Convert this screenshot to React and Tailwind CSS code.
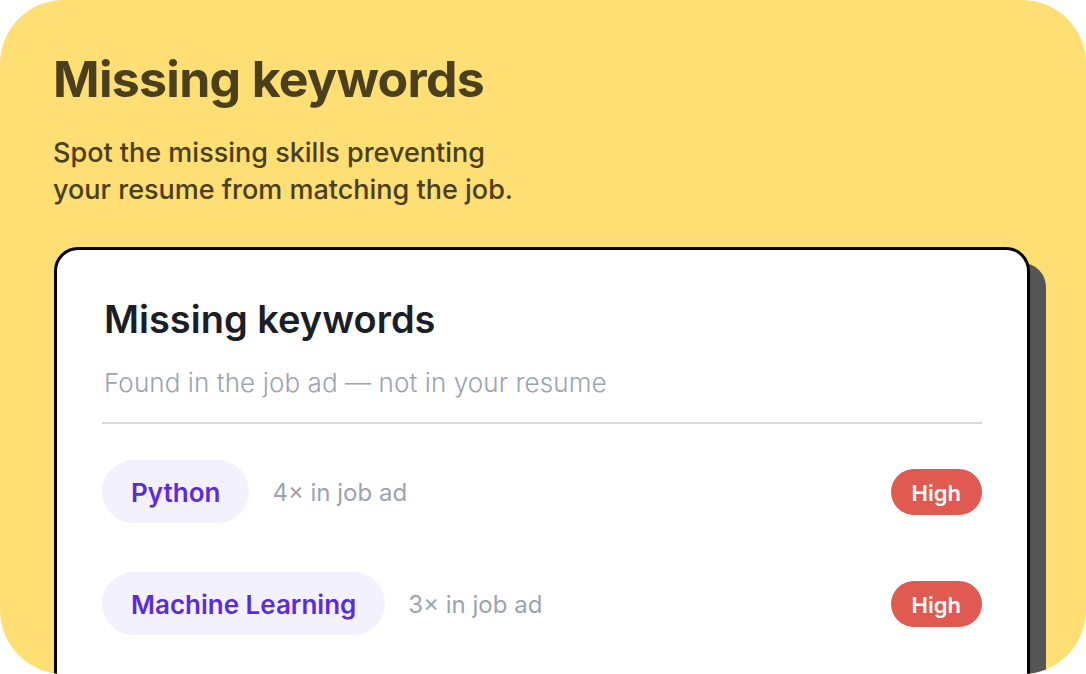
const rows = [
  { name: 'Python', count: '4× in job ad', level: 'High' },
  { name: 'Machine Learning', count: '3× in job ad', level: 'High' },
];

export default function App() {
  return (
    <div className="w-[1086px] h-[674px] bg-white font-['Inter','Liberation_Sans',sans-serif]">
      <div className="h-full rounded-[64px] bg-[#FFDE73] overflow-hidden pl-[53px] pt-[54px]">
        <h1 className="text-[50px] leading-none font-bold text-[#4A401E] tracking-[-0.7px]">Missing keywords</h1>
        <p className="mt-[30px] text-[27px] leading-[37px] font-medium text-[#4A401E]">
          Spot the missing skills preventing
          <br />
          your resume from matching the job.
        </p>

        <div className="mt-[39px] ml-px w-[976px] h-[520px] rounded-[24px] border-[3px] border-black bg-white shadow-[16px_16px_0_#555555] px-[45px] pt-[50px]">
          <h2 className="text-[38px] leading-none font-semibold text-[#1B1E27] pl-[2px]">Missing keywords</h2>
          <p className="mt-[32px] text-[26px] leading-none font-light tracking-[0.1px] text-[#9CA3AF] pl-[2px]">
            Found in the job ad — not in your resume
          </p>
          <div className="mt-[26px] h-[2px] bg-[#D8D8DD]" />

          <div className="mt-[36px] flex flex-col gap-[49px]">
            {rows.map((r) => (
              <div key={r.name} className="flex items-center justify-between">
                <div className="flex items-center gap-[23px]">
                  <span className="h-[63px] px-[29px] pt-[2px] rounded-full bg-[#F3F1FE] text-[#5B2BDD] text-[26px] font-semibold flex items-center">
                    {r.name}
                  </span>
                  <span className="pt-[2px] text-[24px] text-[#9CA3AF]">{r.count}</span>
                </div>
                <span className="h-[46px] px-[21px] pt-[3px] rounded-full bg-[#E05A52] text-white text-[22px] font-semibold flex items-center">
                  {r.level}
                </span>
              </div>
            ))}
          </div>
        </div>
      </div>
    </div>
  );
}
